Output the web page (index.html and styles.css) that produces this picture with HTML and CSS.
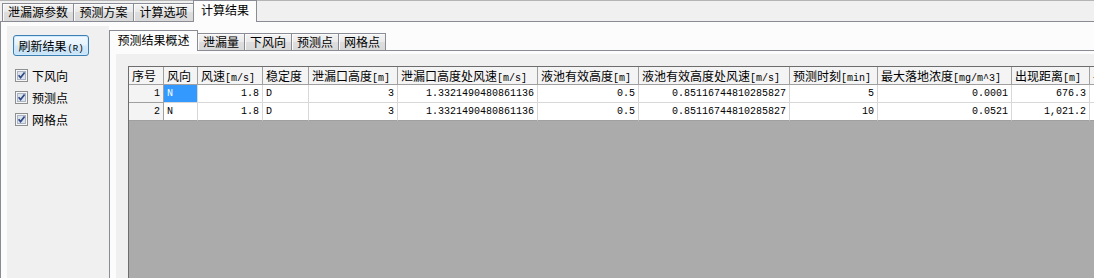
FILE: index.html
```html
<!DOCTYPE html>
<html lang="zh-CN">
<head>
<meta charset="utf-8">
<title>计算结果</title>
<link rel="stylesheet" href="styles.css">
</head>
<body>
<div class="app">
  <div class="otabs">
    <div class="tab ot w72">泄漏源参数</div>
    <div class="tab ot w61">预测方案</div>
    <div class="tab ot w61">计算选项</div>
    <div class="tab osel">计算结果</div>
  </div>
  <div class="opage">
    <div class="side">
      <button class="btn">刷新结果<span class="acc">(R)</span></button>
      <div class="checks">
        <label class="chk"><svg width="13" height="13" viewBox="0 0 13 13"><rect x="0.5" y="0.5" width="12" height="12" fill="#f6f6f6" stroke="#8e8f8f"/><rect x="2.5" y="2.5" width="8" height="8" fill="#dde3ec" stroke="#aab4c4"/><path d="M3.6 6.2 L5.6 8.6 L9.6 3.4" fill="none" stroke="#2f4a86" stroke-width="1.7"/></svg><span>下风向</span></label>
        <label class="chk"><svg width="13" height="13" viewBox="0 0 13 13"><rect x="0.5" y="0.5" width="12" height="12" fill="#f6f6f6" stroke="#8e8f8f"/><rect x="2.5" y="2.5" width="8" height="8" fill="#dde3ec" stroke="#aab4c4"/><path d="M3.6 6.2 L5.6 8.6 L9.6 3.4" fill="none" stroke="#2f4a86" stroke-width="1.7"/></svg><span>预测点</span></label>
        <label class="chk"><svg width="13" height="13" viewBox="0 0 13 13"><rect x="0.5" y="0.5" width="12" height="12" fill="#f6f6f6" stroke="#8e8f8f"/><rect x="2.5" y="2.5" width="8" height="8" fill="#dde3ec" stroke="#aab4c4"/><path d="M3.6 6.2 L5.6 8.6 L9.6 3.4" fill="none" stroke="#2f4a86" stroke-width="1.7"/></svg><span>网格点</span></label>
      </div>
    </div>
    <div class="ictl">
      <div class="itabs">
        <div class="tab isel">预测结果概述</div>
        <div class="tab it">泄漏量</div>
        <div class="tab it">下风向</div>
        <div class="tab it">预测点</div>
        <div class="tab it">网格点</div>
      </div>
      <div class="ipage">
        <div class="panel">
          <div class="grid">
            <div class="row head">
              <div class="c c1">序号</div>
              <div class="c c2">风向</div>
              <div class="c c3">风速<span class="m">[m/s]</span></div>
              <div class="c c4">稳定度</div>
              <div class="c c5">泄漏口高度<span class="m">[m]</span></div>
              <div class="c c6">泄漏口高度处风速<span class="m">[m/s]</span></div>
              <div class="c c7">液池有效高度<span class="m">[m]</span></div>
              <div class="c c8">液池有效高度处风速<span class="m">[m/s]</span></div>
              <div class="c c9">预测时刻<span class="m">[min]</span></div>
              <div class="c c10">最大落地浓度<span class="m">[mg/m^3]</span></div>
              <div class="c c11">出现距离<span class="m">[m]</span></div>
              <div class="c c12">半致死距离<span class="m">[m]</span></div>
            </div>
            <div class="row">
              <div class="c c1 rh r">1</div>
              <div class="c c2 selc">N</div>
              <div class="c c3 r">1.8</div>
              <div class="c c4">D</div>
              <div class="c c5 r">3</div>
              <div class="c c6 r">1.3321490480861136</div>
              <div class="c c7 r">0.5</div>
              <div class="c c8 r">0.85116744810285827</div>
              <div class="c c9 r">5</div>
              <div class="c c10 r">0.0001</div>
              <div class="c c11 r">676.3</div>
              <div class="c c12 r"></div>
            </div>
            <div class="row">
              <div class="c c1 rh r">2</div>
              <div class="c c2">N</div>
              <div class="c c3 r">1.8</div>
              <div class="c c4">D</div>
              <div class="c c5 r">3</div>
              <div class="c c6 r">1.3321490480861136</div>
              <div class="c c7 r">0.5</div>
              <div class="c c8 r">0.85116744810285827</div>
              <div class="c c9 r">10</div>
              <div class="c c10 r">0.0521</div>
              <div class="c c11 r">1,021.2</div>
              <div class="c c12 r"></div>
            </div>
          </div>
        </div>
      </div>
    </div>
  </div>
</div>
</body>
</html>
```

FILE: styles.css
```css
html, body {
  margin: 0;
  padding: 0;
  height: 100%;
  overflow: hidden;
}
body {
  background: #f0f0f0;
  font: 12px "Noto Sans CJK SC", "Noto Sans", sans-serif;
  color: #000;
}
.app {
  display: flex;
  flex-direction: column;
  width: 1094px;
  height: 278px;
  overflow: hidden;
}

/* ---------- tabs ---------- */
.otabs {
  flex: none;
  display: flex;
  align-items: flex-end;
  height: 21px;
  padding-left: 2px;
  background: linear-gradient(#b4b4b4 0, #b4b4b4 1px, #f0f0f0 1px);
}
.tab {
  box-sizing: border-box;
  flex: none;
  border: 1px solid #898c95;
  border-bottom: 0;
  text-align: center;
  white-space: nowrap;
  margin-left: -1px;
  background: linear-gradient(#f4f4f4 0%, #eaeaea 50%, #dedede 50%, #d9d9d9 100%);
  box-shadow: inset 1px 1px 0 #fbfbfb;
}
.tab:first-child { margin-left: 0; }
.ot {
  height: 18px;
  line-height: 16px;
}
.w72 { width: 72px; }
.w61 { width: 61px; }
.osel {
  width: 64px;
  height: 22px;
  line-height: 17px;
  margin-bottom: -1px;
  background: #fcfcfc;
  box-shadow: none;
  position: relative;
  z-index: 1;
}

/* ---------- outer page ---------- */
.opage {
  flex: 1;
  min-height: 0;
  display: flex;
  border-top: 1px solid #898c95;
  border-left: 1px solid #898c95;
  background: #fcfcfc;
  padding: 4px 0 0 6px;
}
.side {
  box-sizing: border-box;
  flex: none;
  width: 102px;
  background: #f0f0f0;
  padding: 9px 0 0 6px;
  display: flex;
  flex-direction: column;
  align-items: flex-start;
}
.btn {
  box-sizing: border-box;
  width: 76px;
  height: 21px;
  margin: 0;
  padding: 0;
  border: 1px solid #3c7fb1;
  border-radius: 3px;
  background: linear-gradient(#f3f9fe 0%, #e6f3fc 45%, #d4eafa 52%, #c6e2f7 100%);
  box-shadow: inset 0 0 0 1px #cfeafc;
  font: 12px "Noto Sans CJK SC", sans-serif;
  line-height: 18px;
  color: #000;
  text-align: center;
}
.acc {
  font: 9px "Liberation Mono", monospace;
  margin-left: 1px;
}
.checks {
  margin-top: 8px;
  display: flex;
  flex-direction: column;
}
.chk {
  display: flex;
  align-items: center;
  height: 22px;
  gap: 4px;
  padding-left: 2px;
}
.chk svg { display: block; }

/* ---------- inner tab control ---------- */
.ictl {
  flex: 1;
  min-width: 0;
  display: flex;
  flex-direction: column;
  padding-top: 4px;
}
.itabs {
  flex: none;
  display: flex;
  align-items: flex-end;
  height: 20px;
}
.isel {
  width: 89px;
  height: 21px;
  line-height: 17px;
  margin-bottom: -1px;
  background: #fcfcfc;
  box-shadow: none;
  position: relative;
  z-index: 1;
}
.it {
  width: 48px;
  height: 17px;
  line-height: 16px;
}
.ipage {
  flex: 1;
  min-height: 0;
  display: flex;
  border-top: 1px solid #898c95;
  border-left: 1px solid #898c95;
  background: #fcfcfc;
  padding: 3px 0 0 6px;
}
.panel {
  flex: 1;
  min-width: 0;
  display: flex;
  background: #f0f0f0;
  padding: 12px 0 0 12px;
}

/* ---------- grid ---------- */
.grid {
  flex: 1;
  min-width: 0;
  border-top: 1px solid #6d6d6d;
  border-left: 1px solid #6d6d6d;
  background: #ababab;
  overflow: hidden;
}
.row {
  display: flex;
  height: 18px;
}
.c {
  box-sizing: border-box;
  flex: none;
  height: 18px;
  border-right: 1px solid #d8d8d8;
  border-bottom: 1px solid #d8d8d8;
  background: #fff;
  padding: 0 3px;
  line-height: 17px;
  white-space: nowrap;
  overflow: hidden;
  font: 10px "Liberation Mono", monospace;
  line-height: 17px;
}
.head .c {
  background: #f4f4f4;
  border-right-color: #a0a0a0;
  border-bottom-color: #a0a0a0;
  font: 12px "Noto Sans CJK SC", sans-serif;
  line-height: 17px;
  padding-left: 3px;
}
.m {
  font: 10px "Liberation Mono", monospace;
}
.rh {
  background: #f4f4f4;
  border-right-color: #a0a0a0;
  border-bottom-color: #a0a0a0;
}
.row:last-child .c { border-bottom-color: #a0a0a0; }
.r { text-align: right; }
.selc {
  background: #3399ff;
  color: #fff;
}
.c1 { width: 35px; }
.c2 { width: 34px; }
.c3 { width: 65px; }
.c4 { width: 46px; }
.c5 { width: 89px; }
.c6 { width: 140px; }
.c7 { width: 101px; }
.c8 { width: 151px; }
.c9 { width: 88px; }
.c10 { width: 134px; }
.c11 { width: 78px; }
.c12 { width: 140px; }
```
